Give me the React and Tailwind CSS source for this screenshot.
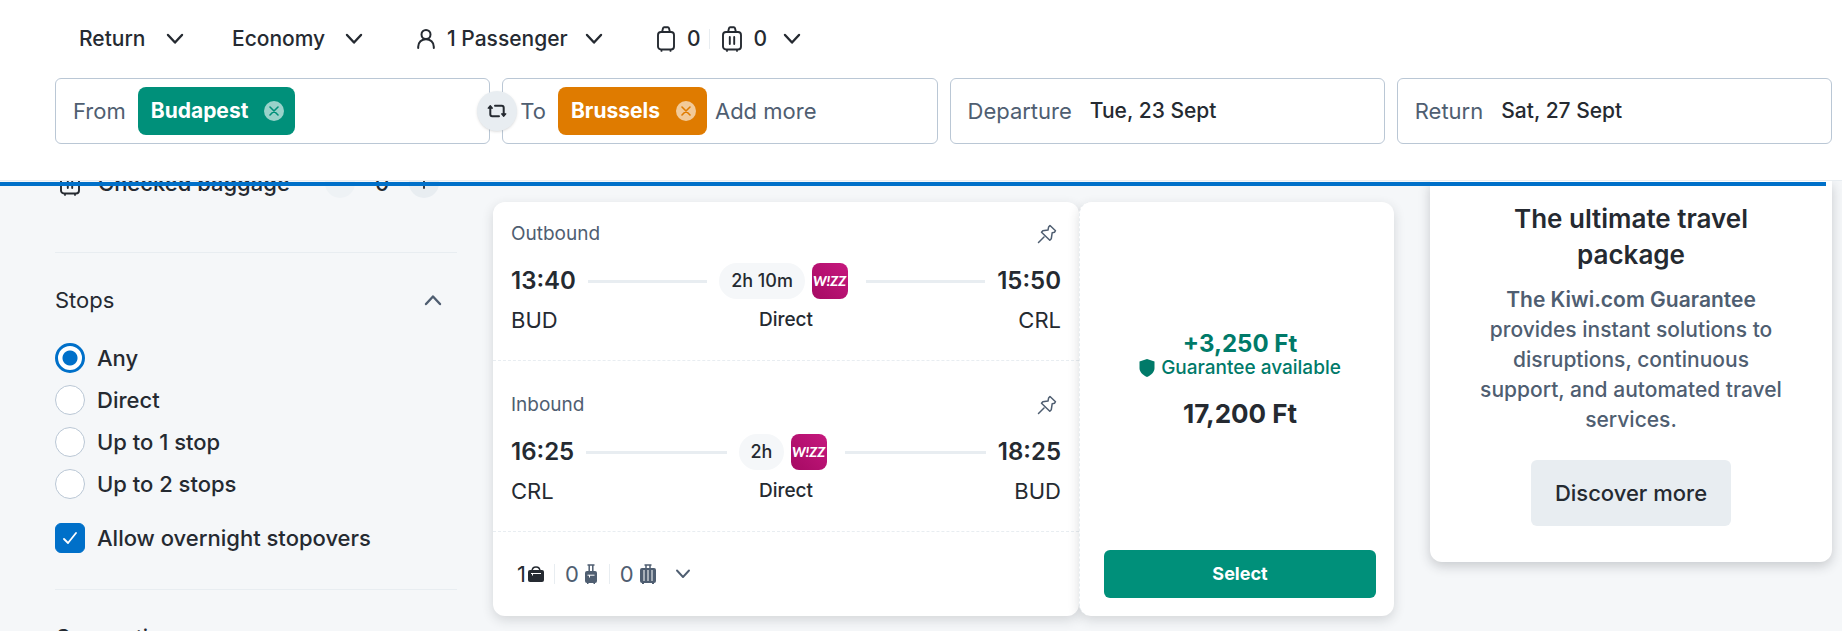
import React, { useState } from 'react'

const Chevron = ({ className = '' }) => (
  <svg viewBox="0 0 18 12" className={`h-3 w-[18px] shrink-0 ${className}`} fill="none" stroke="currentColor" strokeWidth="2.4" strokeLinecap="round" strokeLinejoin="round">
    <path d="M2 2l7 7.5L16 2" />
  </svg>
)

const PersonIcon = () => (
  <svg viewBox="0 0 18 20" className="h-5 w-[18px] shrink-0" fill="none" stroke="currentColor" strokeWidth="2" strokeLinecap="round">
    <circle cx="9" cy="5.5" r="4.5" />
    <path d="M1.200 19v-1.300c0-4.300 3.400-7.500 7.800-7.500s7.800 3.200 7.800 7.500V19" />
  </svg>
)

const CabinBagIcon = () => (
  <svg viewBox="0 0 18 26" className="h-[26px] w-[18px] shrink-0" fill="none" stroke="currentColor" strokeWidth="1.900" strokeLinecap="round">
    <rect x="1" y="6" width="16" height="17.5" rx="3" />
    <path d="M5.2 5.5l.8-3.2C6.200 1.500 6.600 1.200 7.200 1.200h3.600c.6 0 1 .3 1.200 1.100l.8 3.200M4.500 24.800v.1M13.500 24.800v.1" />
  </svg>
)

const CheckedBagIcon = () => (
  <svg viewBox="0 0 20 26" className="h-[26px] w-5 shrink-0" fill="none" stroke="currentColor" strokeWidth="1.900" strokeLinecap="round">
    <rect x="1" y="6" width="18" height="17.5" rx="3" />
    <path d="M6.200 5.500l.8-3.200C7.200 1.500 7.600 1.200 8.200 1.200h3.600c.6 0 1 .3 1.200 1.100l.8 3.200M7.800 11v7M12.200 11v7M5 24.800v.1M15 24.800v.1" />
  </svg>
)

const SwapIcon = () => (
  <svg viewBox="0 0 20 14" className="h-[14px] w-5" fill="none" stroke="currentColor" strokeWidth="2" strokeLinecap="round" strokeLinejoin="round">
    <path d="M3.300 4v6.200c0 1.200.8 2 2 2H12M8 1.800h6.700c1.200 0 2 .8 2 2V10" />
    <path d="M1.200 4.200l2.100-2.600 2.100 2.600zM14.600 9.800l2.100 2.600 2.100-2.600z" fill="currentColor" strokeWidth="1.200" />
  </svg>
)

const PinIcon = () => (
  <svg viewBox="0 0 20 20" className="h-5 w-5" fill="none" stroke="currentColor" strokeWidth="1.500" strokeLinecap="round" strokeLinejoin="round">
    <path d="M1.500 18.500l5.500-5.500M13 1.500l5.500 5.200-.9 1.500-2.400.5-.9 6-1.500 1.500-8.300-8L5.800 6.700l5.200-.6.6-3z" />
  </svg>
)

const ShieldIcon = () => (
  <svg viewBox="0 0 16 18" className="h-[18px] w-4" fill="currentColor">
    <path d="M8 0l7.500 2.600V9c0 4-3 7-7.500 9C3.500 16 .5 13 .5 9V2.600z" />
  </svg>
)

const PersonalItem = () => (
  <svg viewBox="0 0 16 16" className="h-4 w-4" fill="currentColor">
    <path d="M4 5.500C4 2.500 5.500 1 8 1s4 1.500 4 4.500" fill="none" stroke="currentColor" strokeWidth="1.500" />
    <rect y="4" width="16" height="12" rx="2" />
    <path d="M3 7.500h10M4.500 7.500v2" stroke="#fff" strokeWidth="1" />
  </svg>
)

const CabinSmall = () => (
  <svg viewBox="0 0 12 20" className="h-5 w-3" fill="currentColor">
    <path d="M2.500 1h7M4.200 1v7M7.800 1v7" stroke="currentColor" strokeWidth="1.500" fill="none" />
    <path d="M2 7h8a2 2 0 012 2v8a2 2 0 01-2 2v1H8.500v-1h-5v1H2v-1a2 2 0 01-2-2V9a2 2 0 012-2z" />
    <path d="M2.500 11.200h7M4.500 11v2.500" stroke="#fff" strokeWidth="1" />
  </svg>
)

const CheckedSmall = () => (
  <svg viewBox="0 0 16 20" className="h-5 w-4" fill="currentColor">
    <path d="M4.500 1h7M6 1v4M10 1v4" stroke="currentColor" strokeWidth="1.500" fill="none" />
    <path d="M2 4h12a2 2 0 012 2v11a2 2 0 01-2 2v1h-2v-1H4v1H2v-1a2 2 0 01-2-2V6a2 2 0 012-2z" />
    <path d="M4 6v11M8 6v11M12 6v11" stroke="#fff" strokeWidth="1" />
  </svg>
)

const WizzLogo = () => (
  <svg viewBox="0 0 36 36" className="h-9 w-9 shrink-0 rounded-lg" role="img" aria-label="Wizz Air">
    <defs>
      <linearGradient id="wizz" x1="0" y1="1" x2="1" y2="0">
        <stop offset="0" stopColor="#a50a63" />
        <stop offset="1" stopColor="#c6187e" />
      </linearGradient>
    </defs>
    <rect width="36" height="36" fill="url(#wizz)" />
    <text x="17.500" y="23" textAnchor="middle" fill="#fff" fontFamily="Lato, sans-serif" fontSize="14" fontWeight="900" fontStyle="italic">W!ZZ</text>
  </svg>
)

const Chip = ({ color, children }) => (
  <span className={`flex h-12 items-center gap-4 rounded-lg pr-[11px] pl-[13px] text-[21px] font-bold text-white ${color}`}>
    {children}
    <button aria-label={`Remove ${children}`} className="flex h-5 w-5 items-center justify-center rounded-full bg-white/60">
      <svg viewBox="0 0 10 10" className={`h-[10px] w-[10px] ${color === 'bg-[#00907a]' ? 'text-[#00907a]' : 'text-[#df7b00]'}`} stroke="currentColor" strokeWidth="1.600" strokeLinecap="round">
        <path d="M1 1l8 8M9 1L1 9" />
      </svg>
    </button>
  </span>
)

const fieldClass = 'relative flex h-[66px] min-w-0 flex-1 items-center rounded-md border border-[#bac7d5] bg-white px-[17px]'

const SearchHeader = () => (
  <header className="relative z-10 border-b border-[#e8edf1] bg-white pr-[10px] pb-9 pl-[55px]">
    <div className="flex h-[78px] items-center pl-6 text-[21px] font-medium">
      <button className="flex w-[105px] items-center justify-between">Return <Chevron /></button>
      <button className="ml-12 flex w-[131px] items-center justify-between">Economy <Chevron /></button>
      <button className="ml-[54px] flex w-[186px] items-center gap-3">
        <PersonIcon /> 1 Passenger <Chevron className="ml-auto" />
      </button>
      <button className="ml-[54px] flex items-center gap-3">
        <CabinBagIcon /> 0
        <span className="-ml-1 h-5 w-px bg-[#e8edf1]"></span>
        <CheckedBagIcon /> 0
        <Chevron className="ml-1" />
      </button>
    </div>
    <div className="flex gap-3">
      <div className={fieldClass}>
        <label htmlFor="from" className="mr-3 text-[#4f5e71]">From</label>
        <Chip color="bg-[#00907a]">Budapest</Chip>
        <input id="from" className="ml-3 w-0 min-w-0 flex-1 outline-none" />
        <button aria-label="Swap places" className="absolute -right-7 z-10 flex h-10 w-10 items-center justify-center rounded-full bg-[#e8edf1] shadow-sm">
          <SwapIcon />
        </button>
      </div>
      <div className={fieldClass}>
        <label htmlFor="to" className="mr-3 text-[#4f5e71]">To</label>
        <Chip color="bg-[#df7b00]">Brussels</Chip>
        <input id="to" placeholder="Add more" className="ml-2 w-0 min-w-0 flex-1 outline-none placeholder:text-[#4f5e71]" />
      </div>
      <div className={fieldClass}>
        <label htmlFor="departure" className="mr-[18px] text-[#4f5e71]">Departure</label>
        <input id="departure" defaultValue="Tue, 23 Sept" className="w-0 min-w-0 flex-1 text-[21px] font-medium outline-none" />
      </div>
      <div className={fieldClass}>
        <label htmlFor="return" className="mr-[18px] text-[#4f5e71]">Return</label>
        <input id="return" defaultValue="Sat, 27 Sept" className="w-0 min-w-0 flex-1 text-[21px] font-medium outline-none" />
      </div>
    </div>
    {/* Loading progress */}
    <div className="absolute inset-x-0 -bottom-[6px] mr-4 h-1 bg-[#0070c9]"></div>
  </header>
)

const stopOptions = ['Any', 'Direct', 'Up to 1 stop', 'Up to 2 stops']

const Filters = () => {
  const [stops, setStops] = useState('Any')
  const [overnight, setOvernight] = useState(true)

  return (
    <aside className="-mt-[13px] w-[402px] shrink-0">
      <div className="flex h-[85px] items-start border-b border-[#e8edf1] pr-[18px] font-medium">
        <div className="flex h-[30px] w-full items-center">
          <span className="ml-[5px] mr-[18px]"><CheckedBagIcon /></span>
          <span>Checked baggage</span>
          <button aria-label="Remove bag" className="ml-auto h-[30px] w-[30px] rounded-full bg-[#eef2f5]"></button>
          <span className="w-[54px] text-center">0</span>
          <button aria-label="Add bag" className="flex h-[30px] w-[30px] items-center justify-center rounded-full bg-[#e8edf1]">
            <svg viewBox="0 0 12 12" className="h-3 w-3" stroke="currentColor" strokeWidth="1.800" strokeLinecap="round"><path d="M6 1v10M1 6h10" /></svg>
          </button>
        </div>
      </div>

      <button className="flex h-[90px] w-full items-center justify-between pt-1 pr-[15px]">
        Stops
        <Chevron className="rotate-180 text-[#4f5e71]" />
      </button>
      <div className="flex flex-col gap-3 font-medium">
        {stopOptions.map((option) => (
          <label key={option} className="flex h-[30px] items-center gap-3">
            <input
              type="radio"
              name="stops"
              checked={stops === option}
              onChange={() => setStops(option)}
              className="h-[30px] w-[30px] appearance-none rounded-full border border-[#bac7d5] bg-white checked:border-3 checked:border-[#0070c9] checked:bg-[radial-gradient(circle,#0070c9_7px,#fff_8px)]"
            />
            {option}
          </label>
        ))}
      </div>
      <div className="mt-6 border-b border-[#e8edf1] pb-9 font-medium">
        <label className="flex h-[30px] items-center gap-3">
          <span className="grid h-[30px] w-[30px] place-items-center">
            <input
              type="checkbox"
              checked={overnight}
              onChange={() => setOvernight(!overnight)}
              className="col-start-1 row-start-1 h-[30px] w-[30px] appearance-none rounded-md border border-[#bac7d5] bg-white checked:border-[#0070c9] checked:bg-[#0070c9]"
            />
            <svg viewBox="0 0 14 12" className="pointer-events-none col-start-1 row-start-1 h-3 w-[14px]" fill="none" stroke="#fff" strokeWidth="1.800" strokeLinecap="round" strokeLinejoin="round">
              <path d="M1 7l4 4 8-10" />
            </svg>
          </span>
          Allow overnight stopovers
        </label>
      </div>
      <button className="flex h-[90px] w-full items-center justify-between pt-1 pr-[15px]">
        Connections
        <Chevron className="rotate-180 text-[#4f5e71]" />
      </button>
    </aside>
  )
}

const Segment = ({ title, depart, arrive, from, to, duration, top }) => (
  <div className={`border-b border-dashed border-[#e8edf1] px-[18px] pb-[25px] ${top}`}>
    <div className="flex h-7 items-center justify-between text-[19px] text-[#4f5e71]">
      {title}
      <button aria-label={`Pin ${title}`} className="mr-1"><PinIcon /></button>
    </div>
    <div className="mt-[15px] flex h-9 items-center">
      <span className="text-2xl font-semibold">{depart}</span>
      <span className="mx-3 h-[3px] flex-1 bg-[#e8edf1]"></span>
      <span className="flex h-9 items-center rounded-full bg-[#f5f7f9] px-3 text-lg font-medium">{duration}</span>
      <span className="ml-[7px]"><WizzLogo /></span>
      <span className="mr-3 ml-[18px] h-[3px] flex-1 bg-[#e8edf1]"></span>
      <span className="text-2xl font-semibold">{arrive}</span>
    </div>
    <div className="mt-[6px] grid h-[30px] grid-cols-3 items-center">
      <span>{from}</span>
      <span className="text-center text-[19px] font-medium">Direct</span>
      <span className="text-right">{to}</span>
    </div>
  </div>
)

const ResultCard = () => (
  <article className="mt-[21px] flex min-w-0 flex-1 self-start">
    <div className="min-w-0 flex-1 rounded-xl bg-white shadow-[0_4px_12px_rgba(37,42,49,0.16)]">
      <Segment title="Outbound" depart="13:40" arrive="15:50" from="BUD" to="CRL" duration="2h 10m" top="pt-[18px]" />
      <Segment title="Inbound" depart="16:25" arrive="18:25" from="CRL" to="BUD" duration="2h" top="pt-[30px]" />
      <button className="flex h-[84px] items-center pl-6 text-[#4f5e71]">
        <span className="flex items-center gap-[2px] text-[#252a31]">1<PersonalItem /></span>
        <span className="mx-[10px] h-5 w-px bg-[#e8edf1]"></span>
        <span className="flex items-center gap-[6px]">0<CabinSmall /></span>
        <span className="mr-[10px] ml-3 h-5 w-px bg-[#e8edf1]"></span>
        <span className="flex items-center gap-[6px]">0<CheckedSmall /></span>
        <svg viewBox="0 0 14 10" className="ml-5 h-[10px] w-[14px]" fill="none" stroke="currentColor" strokeWidth="1.900" strokeLinecap="round" strokeLinejoin="round"><path d="M1 1.500l6 6.500 6-6.500" /></svg>
      </button>
    </div>
    <div className="flex w-[315px] shrink-0 flex-col rounded-xl border-l border-dashed border-[#e8edf1] bg-white pr-[18px] pb-[18px] pl-6 shadow-[0_4px_12px_rgba(37,42,49,0.16)]">
      <div className="flex flex-1 flex-col items-center justify-center pt-3 text-[#007a69]">
        <span className="text-2xl leading-6 font-bold">+3,250 Ft</span>
        <span className="flex items-center gap-[6px] text-[19px] leading-6 font-medium"><ShieldIcon /> Guarantee available</span>
        <strong className="mt-4 text-[26px] leading-9 font-bold text-[#252a31]">17,200 Ft</strong>
      </div>
      <button className="h-12 rounded-md bg-[#00907a] text-lg font-bold text-white">Select</button>
    </div>
  </article>
)

const GuaranteeCard = () => (
  <section className="w-[402px] shrink-0 self-start rounded-b-xl bg-white px-9 pt-5 pb-9 text-center shadow-[0_4px_12px_rgba(37,42,49,0.22)]">
    <h2 className="px-9 text-[26px] leading-9 font-semibold">The ultimate travel package</h2>
    <p className="mt-3 px-[5px] text-[21px] leading-[30px] font-medium text-[#4f5e71]">
      <strong className="font-semibold">The Kiwi.com Guarantee</strong> provides instant solutions to disruptions, continuous support, and automated travel services.
    </p>
    <button className="mt-[25px] h-[66px] rounded-md bg-[#e8edf1] px-6 font-medium">Discover more</button>
  </section>
)

const App = () => {
  return (
    <div className="flex h-screen flex-col overflow-hidden bg-[#f5f7f9] font-['Inter',sans-serif] text-[22px] leading-[30px] text-[#252a31]">
      <SearchHeader />
      <main className="flex min-h-0 flex-1 gap-9 pr-[10px] pl-[55px]">
        <Filters />
        <ResultCard />
        <GuaranteeCard />
      </main>
    </div>
  )
}

export default App
